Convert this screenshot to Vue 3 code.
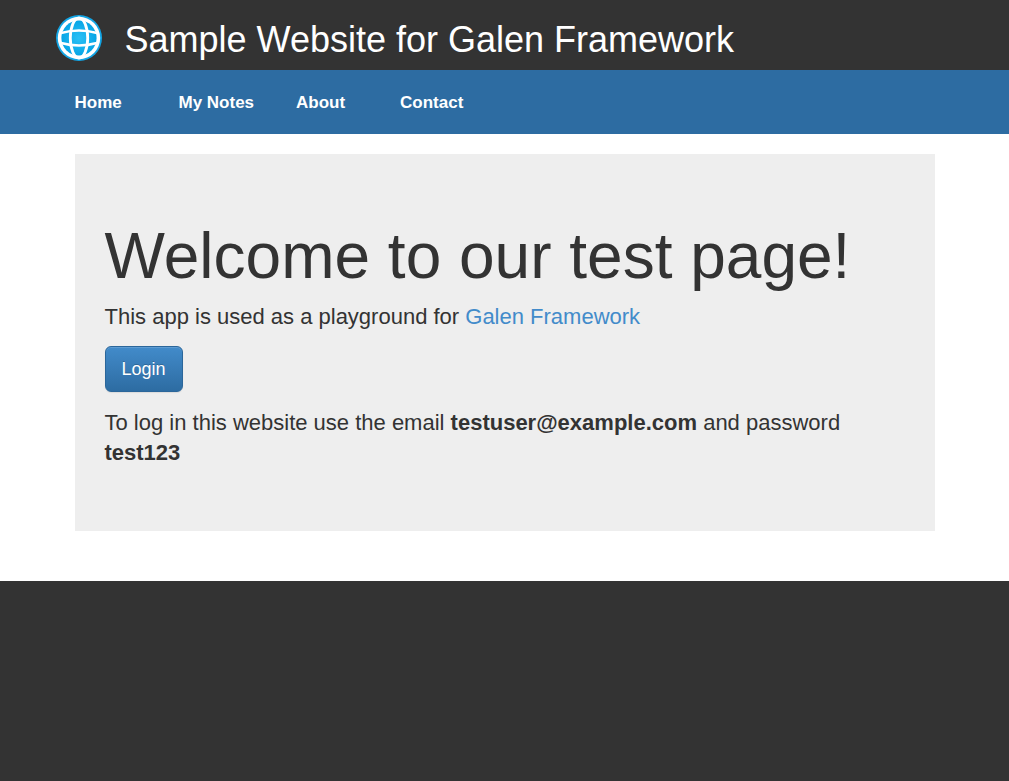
<script setup>
const links = ['Home', 'My Notes', 'About', 'Contact']
</script>

<template>
  <div class="page">
    <header class="header">
      <div class="container brand">
        <svg class="logo" viewBox="0 0 48 48" role="img" aria-label="Globe">
          <defs>
            <radialGradient id="sea">
              <stop offset="0" stop-color="#2cc0f5" />
              <stop offset="1" stop-color="#06a5e6" />
            </radialGradient>
          </defs>
          <circle cx="24" cy="24" r="23" fill="#12a5e5" />
          <circle cx="24" cy="24" r="21.2" fill="#fff" />
          <circle cx="24" cy="24" r="17.6" fill="url(#sea)" />
          <g fill="none" stroke="#fff">
            <ellipse cx="24" cy="24" rx="8.7" ry="20" stroke-width="2.8" />
            <path d="M6 19Q24 14 42 19M6 29Q24 34 42 29" stroke-width="2.4" />
          </g>
        </svg>
        <h1 class="title">Sample Website for Galen Framework</h1>
      </div>
    </header>
    <nav class="menu">
      <ul class="container links">
        <li v-for="link in links" :key="link"><a href="#">{{ link }}</a></li>
      </ul>
    </nav>
    <main class="container content">
      <section class="jumbotron">
        <h2>Welcome to our test page!</h2>
        <p>This app is used as a playground for <a href="#">Galen Framework</a></p>
        <button type="button" class="login">Login</button>
        <p>To log in this website use the email <b>testuser@example.com</b> and password <b>test123</b></p>
      </section>
    </main>
  </div>
</template>

<style>
body {
  margin: 0;
  background: #333;
}
</style>

<style scoped>
.page {
  font-family: "Liberation Sans", Arial, sans-serif;
  color: #333;
  background: #fff;
}
.container {
  box-sizing: border-box;
  max-width: 900px;
  margin: 0 auto;
  padding: 0 20px;
}
.header {
  background: #333;
}
.brand {
  display: flex;
  align-items: flex-start;
  gap: 22px;
  padding: 14px 0 6px;
}
.logo {
  flex: none;
  width: 48px;
  height: 48px;
}
.title {
  margin: 0;
  padding-top: 2px;
  font-size: 36px;
  line-height: 48px;
  font-weight: 400;
  color: #fff;
}
.menu {
  background: #2d6ca2;
}
.links {
  display: flex;
  list-style: none;
}
.links li {
  box-sizing: border-box;
  min-width: 104px;
  padding-right: 42px;
}
.links a {
  display: block;
  padding: 21px 0 19px;
  font-size: 17px;
  line-height: 24px;
  font-weight: 700;
  color: #fff;
  text-decoration: none;
}
.content {
  padding-top: 20px;
  padding-bottom: 50px;
}
.jumbotron {
  padding: 68px 30px 49px;
  background: #eee;
}
h2 {
  margin: 0 0 11px;
  font-size: 64px;
  line-height: 69px;
  font-weight: 400;
}
p {
  margin: 0 0 14px;
  font-size: 22px;
  line-height: 30px;
}
p a {
  color: #428bca;
  text-decoration: none;
}
.login {
  display: block;
  margin: 0 0 16px;
  padding: 10px 16px;
  border: 1px solid #2b669a;
  border-radius: 6px;
  font: 18px/24px "Liberation Sans", Arial, sans-serif;
  color: #fff;
  text-shadow: 0 -1px 0 rgba(0, 0, 0, 0.2);
  background: linear-gradient(#428bca, #2d6ca2);
  box-shadow: inset 0 1px 0 rgba(255, 255, 255, 0.15), 0 1px 1px rgba(0, 0, 0, 0.08);
}
</style>
